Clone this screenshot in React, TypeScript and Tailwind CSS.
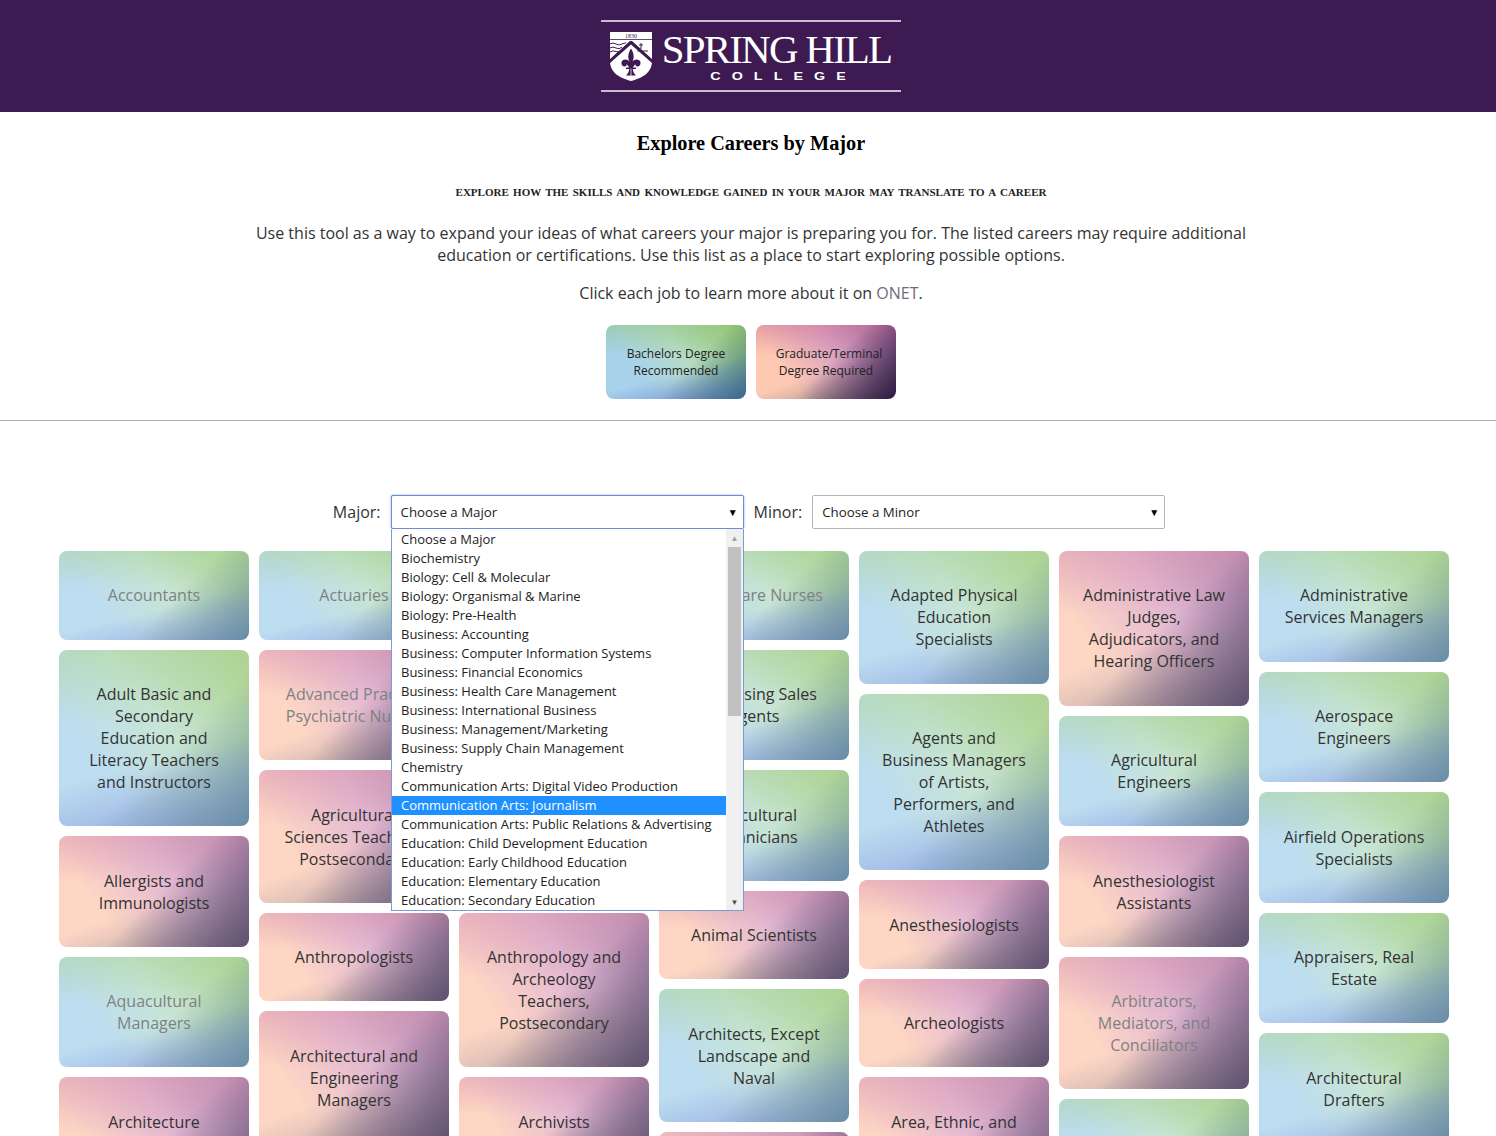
const blue = "bg-[linear-gradient(135deg,rgba(50,100,125,0)_58%,rgba(50,100,125,0.85)_100%),linear-gradient(165deg,rgba(105,130,210,0)_60%,rgba(105,130,210,0.9)_100%),linear-gradient(180deg,rgba(140,195,120,0.45)_0%,rgba(140,195,120,0)_42%),linear-gradient(55deg,#a8d2ec_25%,#b6dcc8_55%,#98c868_100%)]";
const pink = "bg-[linear-gradient(135deg,rgba(45,25,65,0)_52%,rgba(45,25,65,1)_100%),linear-gradient(160deg,rgba(120,110,120,0)_56%,rgba(120,110,120,0.8)_100%),linear-gradient(180deg,rgba(210,120,150,0.5)_0%,rgba(210,120,150,0)_42%),linear-gradient(55deg,#fdc9b2_25%,#d8a0c4_60%,#8a5a96_100%)]";
const cardBlue = "bg-[linear-gradient(rgba(255,255,255,0.24),rgba(255,255,255,0.24)),linear-gradient(135deg,rgba(50,100,125,0)_58%,rgba(50,100,125,0.85)_100%),linear-gradient(165deg,rgba(105,130,210,0)_60%,rgba(105,130,210,0.9)_100%),linear-gradient(180deg,rgba(140,195,120,0.45)_0%,rgba(140,195,120,0)_42%),linear-gradient(55deg,#a8d2ec_25%,#b6dcc8_55%,#98c868_100%)]";
const cardPink = "bg-[linear-gradient(rgba(255,255,255,0.24),rgba(255,255,255,0.24)),linear-gradient(135deg,rgba(45,25,65,0)_52%,rgba(45,25,65,1)_100%),linear-gradient(160deg,rgba(120,110,120,0)_56%,rgba(120,110,120,0.8)_100%),linear-gradient(180deg,rgba(210,120,150,0.5)_0%,rgba(210,120,150,0)_42%),linear-gradient(55deg,#fdc9b2_25%,#d8a0c4_60%,#8a5a96_100%)]";

type C = { t: string; p?: boolean; f?: boolean };
const cols: C[][] = [
  [
    { t: "Accountants", f: true },
    { t: "Adult Basic and Secondary Education and Literacy Teachers and Instructors" },
    { t: "Allergists and Immunologists", p: true },
    { t: "Aquacultural Managers", f: true },
    { t: "Architecture Teachers, Postsecondary", p: true },
  ],
  [
    { t: "Actuaries", f: true },
    { t: "Advanced Practice Psychiatric Nurses", p: true, f: true },
    { t: "Agricultural Sciences Teachers, Postsecondary", p: true },
    { t: "Anthropologists", p: true },
    { t: "Architectural and Engineering Managers", p: true },
  ],
  [
    { t: "Acupuncturists", p: true },
    { t: "Advertising Managers" },
    { t: "Agricultural Inspectors and Graders" },
    { t: "Anthropology and Archeology Teachers, Postsecondary", p: true },
    { t: "Archivists", p: true },
  ],
  [
    { t: "Acute Care Nurses", f: true },
    { t: "Advertising Sales Agents" },
    { t: "Agricultural Technicians" },
    { t: "Animal Scientists", p: true },
    { t: "Architects, Except Landscape and Naval" },
    { t: "Architecture", p: true },
  ],
  [
    { t: "Adapted Physical Education Specialists" },
    { t: "Agents and Business Managers of Artists, Performers, and Athletes" },
    { t: "Anesthesiologists", p: true },
    { t: "Archeologists", p: true },
    { t: "Area, Ethnic, and Cultural Studies Teachers", p: true },
  ],
  [
    { t: "Administrative Law Judges, Adjudicators, and Hearing Officers", p: true },
    { t: "Agricultural Engineers" },
    { t: "Anesthesiologist Assistants", p: true },
    { t: "Arbitrators, Mediators, and Conciliators", p: true, f: true },
    { t: "Architectural" },
  ],
  [
    { t: "Administrative Services Managers" },
    { t: "Aerospace Engineers" },
    { t: "Airfield Operations Specialists" },
    { t: "Appraisers, Real Estate" },
    { t: "Architectural Drafters" },
  ],
];

const majors = [
  "Choose a Major",
  "Biochemistry",
  "Biology: Cell & Molecular",
  "Biology: Organismal & Marine",
  "Biology: Pre-Health",
  "Business: Accounting",
  "Business: Computer Information Systems",
  "Business: Financial Economics",
  "Business: Health Care Management",
  "Business: International Business",
  "Business: Management/Marketing",
  "Business: Supply Chain Management",
  "Chemistry",
  "Communication Arts: Digital Video Production",
  "Communication Arts: Journalism",
  "Communication Arts: Public Relations & Advertising",
  "Education: Child Development Education",
  "Education: Early Childhood Education",
  "Education: Elementary Education",
  "Education: Secondary Education",
];

function Shield() {
  return (
    <svg width="42" height="49" viewBox="0 0 42 49" className="shrink-0">
      <path d="M0 0H42V29C42 41 32 46 21 49C10 46 0 41 0 29Z" fill="#fff" />
      <path d="M0 7.500H42" stroke="#3e1a52" strokeWidth="0.8" />
      <path d="M0 27L20 9L22 9L42 27V31L21 12.500L0 31Z" fill="#3e1a52" />
      <path d="M0 12q3-2 6 0t6 0q2-1 4-1M0 16q3-2 6 0t6-1M0 20q3-2 6-.5t2-.5" fill="none" stroke="#3e1a52" strokeWidth="1" />
      <path d="M31 11v6M29 13h4M27.500 19h2M32 19h6" stroke="#3e1a52" strokeWidth="1" fill="none" />
      <g transform="translate(0,3.500)">
        <path
          d="M21 13C24 18 24.500 22 22.500 26C24 24 27 23 29.500 25C31.500 27 30.500 31 27.500 31C26 31 25 30 25.500 28.500C24.500 29.500 23.500 31 22.800 32H26V33.500H22.800C23 36 24 38 26 40H16C18 38 19 36 19.200 33.500H16V32H19.200C18.500 31 17.500 29.500 16.500 28.500C17 30 16 31 14.500 31C11.500 31 10.500 27 12.500 25C15 23 18 24 19.500 26C17.500 22 18 18 21 13Z"
          fill="#3e1a52"
        />
        <path d="M21 33v7" stroke="#fff" strokeWidth="1.2" opacity="0.6" />
      </g>
      <text x="21" y="5.600" textAnchor="middle" fontSize="6" fill="#3e1a52" fontFamily="'Liberation Serif', serif">1830</text>
    </svg>
  );
}

function FakeSelect({ label, value, focused }: { label: string; value: string; focused?: boolean }) {
  return (
    <>
      <span className="text-[16px] text-[#333] mr-[10px]">{label}</span>
      <div
        className={
          focused
            ? "w-[353px] h-[34px] bg-white border border-[#6d8fd0] rounded-[2px] shadow-[0_0_2px_rgba(80,120,210,0.8)] flex items-center justify-between pl-[9px] pr-[5px] pt-px text-[13.3px] text-[#222]"
            : "w-[353px] h-[34px] bg-white border border-[#b5b5b5] rounded-[2px] flex items-center justify-between pl-[9px] pr-[5px] pt-px text-[13.3px] text-[#222]"
        }
      >
        <span>{value}</span>
        <span className="text-[10px] text-black">▼</span>
      </div>
    </>
  );
}

export default function App() {
  return (
    <div className="w-[1496px] h-[1136px] overflow-hidden bg-white font-['Open_Sans','Noto_Sans',sans-serif] text-[#333]">
      <header className="h-[112px] bg-[#3e1a52] flex items-center justify-center pl-[6px]">
        <div className="w-[300px] h-[72px] border-y-2 border-[#c9bdd0] flex items-center pl-[9px] gap-[10px]">
          <Shield />
          <div className="flex flex-col items-center w-[232px] text-white">
            <span className="font-['Liberation_Serif',serif] text-[41px] leading-[40px] tracking-[-1.8px] whitespace-nowrap mt-[-2px] mr-[3px]">SPRING HILL</span>
            <span className="font-['Liberation_Sans',sans-serif] font-bold text-[11px] leading-[11px] tracking-[8.500px] pl-[8px] scale-x-[1.3] whitespace-nowrap mt-[2px]">COLLEGE</span>
          </div>
        </div>
      </header>

      <main className="flex flex-col items-center pl-[6px]">
        <h1 className="font-['Liberation_Serif',serif] font-bold text-[20.3px] leading-[24px] text-black mt-[19px]">Explore Careers by Major</h1>
        <h2 className="font-['Liberation_Serif',serif] font-bold text-[11px] [word-spacing:1.6px] leading-[16px] text-[#222] mt-[29px] whitespace-nowrap">EXPLORE HOW THE SKILLS AND KNOWLEDGE GAINED IN YOUR MAJOR MAY TRANSLATE TO A CAREER</h2>
        <p className="text-[16px] leading-[22px] text-center w-[1010px] mt-[22px]">
          Use this tool as a way to expand your ideas of what careers your major is preparing you for. The listed careers may require additional education or certifications. Use this list as a place to start exploring possible options.
        </p>
        <p className="text-[16px] leading-[22px] text-center mt-[16px]">
          Click each job to learn more about it on <span className="text-[#75697c]">ONET</span>.
        </p>
        <div className="flex gap-[10px] mt-[21px]">
          <div className={`w-[140px] h-[74px] rounded-[8px] flex items-center justify-center text-center text-[12px] leading-[17px] text-[#222] ${blue}`}>
            <span>Bachelors Degree<br />Recommended</span>
          </div>
          <div className={`w-[140px] h-[74px] rounded-[8px] flex items-center justify-center text-center text-[12px] leading-[17px] text-[#222] ${pink}`}>
            <span><span className="pl-[6px]">Graduate/Terminal</span><br />Degree Required</span>
          </div>
        </div>
      </main>

      <hr className="border-0 h-px bg-[#aaaaaa] mt-[21px]" />

      <div className="relative mt-[74px]">
        <div className="flex items-center justify-center h-[34px] pl-[2px]">
          <FakeSelect label="Major:" value="Choose a Major" focused />
          <div className="w-[10px]" />
          <FakeSelect label="Minor:" value="Choose a Minor" />
        </div>

        <div className="absolute z-10 left-[391px] top-[34px] w-[353px] h-[382px] bg-white border border-t-0 border-[#7c9bd0] flex text-[13px] leading-[19px] text-[#222]">
          <ul className="flex-1 pt-px">
            {majors.map((m) => (
              <li key={m} className={m === "Communication Arts: Journalism" ? "h-[19px] pl-[9px] bg-[#1e90ff] text-white whitespace-nowrap" : "h-[19px] pl-[9px] whitespace-nowrap"}>{m}</li>
            ))}
          </ul>
          <div className="w-[17px] bg-[#f0f0f0] flex flex-col items-center">
            <div className="h-[18px] text-[8px] leading-[17px] text-[#a0a0a0]">▲</div>
            <div className="w-[13px] h-[169px] bg-[#c1c1c1]" />
            <div className="flex-1" />
            <div className="h-[17px] text-[8px] leading-[17px] text-[#505050]">▼</div>
          </div>
        </div>

        <div className="flex gap-[10px] pl-[59px] mt-[22px]">
          {cols.map((col, i) => (
            <div key={i} className="w-[190px] flex flex-col gap-[10px]">
              {col.map((c) => (
                <div
                  key={c.t}
                  className={`rounded-[8px] pt-[33.4px] pb-[33.2px] px-[20px] text-center text-[16px] leading-[22px] ${c.p ? cardPink : cardBlue}`}
                >
                  <span className={c.f ? "text-[#7e8184]" : "text-[#333]"}>{c.t}</span>
                </div>
              ))}
            </div>
          ))}
        </div>
      </div>
    </div>
  );
}
